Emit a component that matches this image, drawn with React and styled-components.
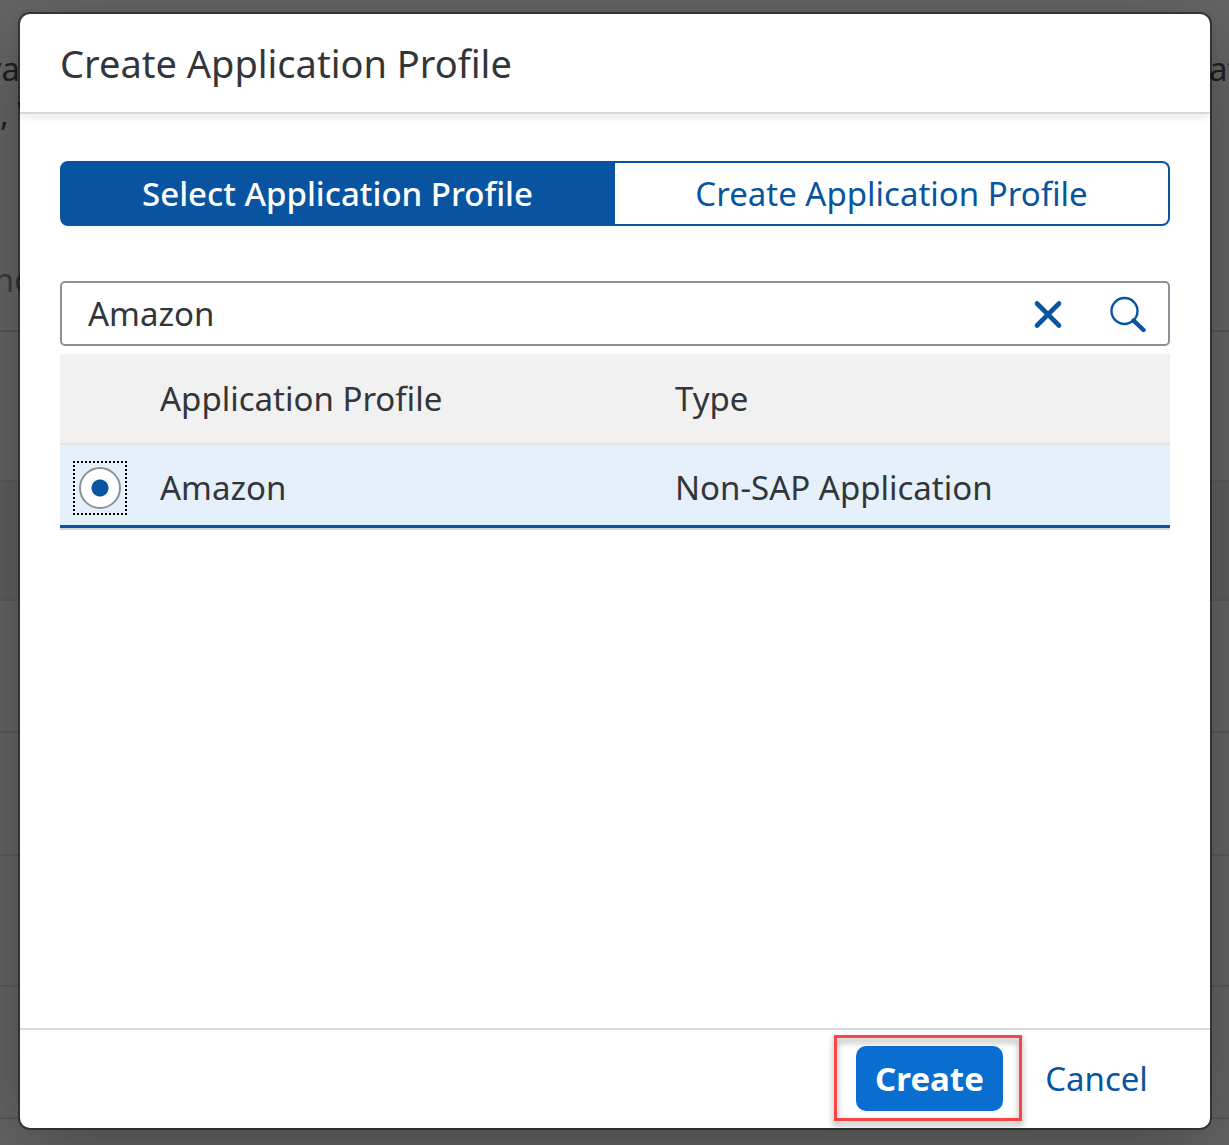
import React, { useState } from "react";
import styled, { createGlobalStyle } from "styled-components";

const GlobalStyle = createGlobalStyle`
  *, *::before, *::after { box-sizing: border-box; }
  body { margin: 0; background: #656565; }
  body, button, input, table {
    font-family: "Noto Sans", "Liberation Sans", sans-serif;
    font-size: 33px;
    line-height: 45px;
    color: #32363a;
  }
`;

const Screen = styled.div`
  position: relative;
  min-height: 100vh;
  display: flex;
  overflow: hidden;
`;

const Backdrop = styled.div`
  position: absolute;
  inset: 0;
  color: #1d1f21;
`;

const BackdropIntro = styled.div`
  height: 332px;
  padding-top: 46px;
  border-bottom: 2px solid #585858;
`;

const BackdropLine = styled.div`
  display: flex;
  justify-content: space-between;
  margin-bottom: ${(p) => p.$gap || 0}px;
  color: ${(p) => (p.$soft ? "#383a3c" : "inherit")};
`;

const Gutter = styled.span`
  width: ${(p) => p.$width || 20}px;
  display: flex;
  justify-content: ${(p) => (p.$align === "end" ? "flex-end" : "flex-start")};
  white-space: nowrap;
`;

const BackdropRow = styled.div`
  height: ${(p) => p.$height}px;
  border-bottom: 2px solid #5a5a5a;
  background: ${(p) => (p.$dark ? "#5f5f5f" : "transparent")};
`;

const Overlay = styled.div`
  position: relative;
  flex: 1;
  display: flex;
  padding: 14px 19px 17px 20px;
`;

const Dialog = styled.section`
  flex: 1;
  display: flex;
  flex-direction: column;
  background: #fff;
  border-radius: 10px;
  box-shadow: 0 0 0 2px rgba(0, 0, 0, 0.42), 0 20px 80px rgba(0, 0, 0, 0.3);
`;

const DialogHeader = styled.header`
  padding: 25px 40px 24px;
  border-bottom: 2px solid #d9d9d9;
  box-shadow: 0 4px 8px rgba(0, 0, 0, 0.08);
`;

const Title = styled.h1`
  margin: 0;
  font-size: 38px;
  line-height: 49px;
  font-weight: 400;
`;

const Body = styled.div`
  flex: 1;
  padding: 47px 40px 40px;
`;

const Segments = styled.div`
  display: flex;
  margin-bottom: 55px;
`;

const Segment = styled.button`
  width: 50%;
  height: 65px;
  padding: 0;
  border: 2px solid #0854a0;
  border-left-width: ${(p) => (p.$last ? 0 : 2)}px;
  border-radius: ${(p) => (p.$last ? "0 8px 8px 0" : "8px 0 0 8px")};
  background: ${(p) => (p.$selected ? "#0854a0" : "#fff")};
  color: ${(p) => (p.$selected ? "#fff" : "#0854a0")};
  font-weight: ${(p) => (p.$selected ? 500 : 400)};
  cursor: pointer;
`;

const SearchField = styled.form`
  display: flex;
  align-items: center;
  height: 65px;
  margin-bottom: 8px;
  border: 2px solid #89919a;
  border-radius: 5px;
`;

const SearchInput = styled.input`
  flex: 1;
  min-width: 0;
  padding: 0 0 0 26px;
  border: 0;
  outline: 0;
  background: transparent;
`;

const IconButton = styled.button`
  width: 80px;
  height: 61px;
  padding: 0;
  border: 0;
  background: transparent;
  color: #0854a0;
  display: flex;
  align-items: center;
  justify-content: center;
  cursor: pointer;
`;

const ProfileTable = styled.table`
  width: 100%;
  border-collapse: separate;
  border-spacing: 0;
  table-layout: fixed;
  border-bottom: 2px solid #d5d5d5;
`;

const HeadCell = styled.th`
  width: ${(p) => p.$width || "auto"};
  height: 91px;
  padding: 0 20px;
  text-align: left;
  font-weight: 400;
  background: #f1f1f1;
  border-bottom: 2px solid #e4e4e4;
`;

const Cell = styled.td`
  height: 83px;
  padding: ${(p) => (p.$choice ? "6px 0 0" : "4px 20px 0")};
  background: #e5f0fa;
  border-bottom: 3px solid #0854a0;
`;

const RowLabel = styled.label`
  display: block;
`;

const FocusFrame = styled.div`
  width: 54px;
  height: 54px;
  margin: 0 auto;
  border: 2px dotted #000;
  display: flex;
`;

const Radio = styled.input`
  appearance: none;
  width: 42px;
  height: 42px;
  margin: auto;
  border: 2px solid #89919a;
  border-radius: 50%;
  background: #fff;
  &:checked {
    background: radial-gradient(circle, #0854a0 8px, #fff 9px);
    outline: none;
  }
`;

const Footer = styled.footer`
  display: flex;
  justify-content: flex-end;
  gap: 20px;
  padding: 16px 40px 17px;
  border-top: 2px solid #d9d9d9;
`;

const FooterButton = styled.button`
  min-width: 147px;
  height: 65px;
  padding: 0 19px;
  border: 0;
  border-radius: 10px;
  background: ${(p) => (p.$primary ? "#0a6ed1" : "transparent")};
  color: ${(p) => (p.$primary ? "#fff" : "#0854a0")};
  font-weight: ${(p) => (p.$primary ? 700 : 400)};
  cursor: pointer;
`;

const Highlight = styled.div`
  position: relative;
  &::after {
    content: "";
    position: absolute;
    inset: -11px -19px -10px -22px;
    border: 3px solid #fb4444;
    filter: drop-shadow(0 4px 3px rgba(0, 0, 0, 0.4));
    pointer-events: none;
  }
`;

const rows = [{ height: 150 }, { height: 119, dark: true }, { height: 132 }, { height: 123 }, { height: 131 }, { height: 132 }];

export default function App() {
  const [query, setQuery] = useState("Amazon");
  const [tab, setTab] = useState("select");

  return (
    <>
      <GlobalStyle />
      <Screen>
        <Backdrop aria-hidden="true">
          <BackdropIntro>
            <BackdropLine>
              <Gutter $align="end">va</Gutter>
              <Gutter>at</Gutter>
            </BackdropLine>
            <BackdropLine $gap={121}>
              <Gutter>, V</Gutter>
            </BackdropLine>
            <BackdropLine $soft>
              <Gutter $align="end" $width={34}>no</Gutter>
            </BackdropLine>
          </BackdropIntro>
          {rows.map((row, i) => (
            <BackdropRow key={i} $height={row.height} $dark={row.dark} />
          ))}
        </Backdrop>
        <Overlay>
          <Dialog role="dialog" aria-labelledby="dialog-title">
            <DialogHeader>
              <Title id="dialog-title">Create Application Profile</Title>
            </DialogHeader>
            <Body>
              <Segments>
                <Segment type="button" $selected={tab === "select"} onClick={() => setTab("select")}>
                  Select Application Profile
                </Segment>
                <Segment type="button" $last $selected={tab === "create"} onClick={() => setTab("create")}>
                  Create Application Profile
                </Segment>
              </Segments>
              <SearchField onSubmit={(e) => e.preventDefault()}>
                <SearchInput
                  aria-label="Search application profiles"
                  value={query}
                  onChange={(e) => setQuery(e.target.value)}
                />
                <IconButton type="button" aria-label="Clear" onClick={() => setQuery("")}>
                  <svg width="30" height="30" viewBox="0 0 30 30" fill="none" stroke="currentColor" strokeWidth="4.6" strokeLinecap="round">
                    <path d="M4 4.5 26 26.5M26 4.5 4 26.5" />
                  </svg>
                </IconButton>
                <IconButton type="submit" aria-label="Search">
                  <svg width="36" height="36" viewBox="0 0 36 36" fill="none" stroke="currentColor">
                    <circle cx="14.5" cy="15" r="13" strokeWidth="2.4" />
                    <path d="M23.5 24.5 33.5 34" strokeWidth="4.4" strokeLinecap="round" />
                  </svg>
                </IconButton>
              </SearchField>
              <ProfileTable>
                <thead>
                  <tr>
                    <HeadCell $width="80px" aria-label="Selection" />
                    <HeadCell>Application Profile</HeadCell>
                    <HeadCell>Type</HeadCell>
                  </tr>
                </thead>
                <tbody>
                  <tr>
                    <Cell $choice>
                      <FocusFrame>
                        <Radio type="radio" id="profile-amazon" name="profile" defaultChecked />
                      </FocusFrame>
                    </Cell>
                    <Cell>
                      <RowLabel htmlFor="profile-amazon">Amazon</RowLabel>
                    </Cell>
                    <Cell>Non-SAP Application</Cell>
                  </tr>
                </tbody>
              </ProfileTable>
            </Body>
            <Footer>
              <Highlight>
                <FooterButton type="button" $primary>Create</FooterButton>
              </Highlight>
              <FooterButton type="button">Cancel</FooterButton>
            </Footer>
          </Dialog>
        </Overlay>
      </Screen>
    </>
  );
}
